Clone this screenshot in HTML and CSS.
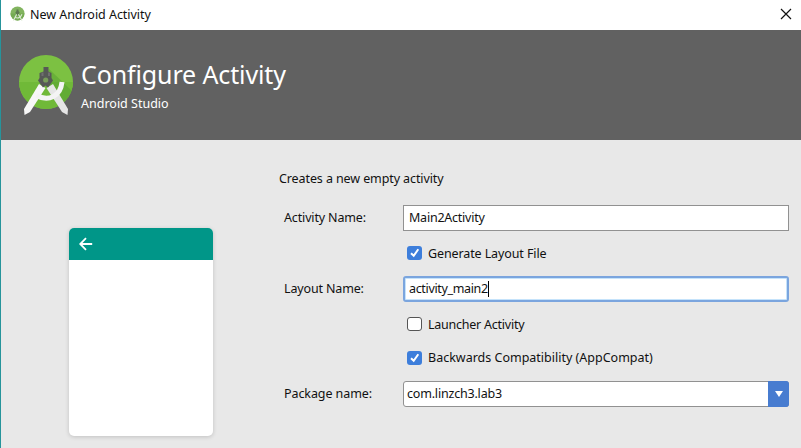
FILE: index.html
```html
<!DOCTYPE html>
<html lang="en">
<head>
<meta charset="utf-8">
<title>New Android Activity</title>
<link rel="stylesheet" href="styles.css">
</head>
<body>
<div class="window">
  <div class="titlebar">
    <svg class="app-icon" width="16" height="16" viewBox="0 0 16 16">
      <circle cx="7.500" cy="7.500" r="7" fill="#82b45f"/>
      <path d="M.5 7.500a7 7 0 0 0 14 0z" fill="#74aa52"/>
      <path d="M6.800 8 3.500 14.500M8.200 8l3.800 6.500M5 11.300c3 1.500 5.500.5 7-3" fill="none" stroke="#d9e8d0" stroke-width="1.200"/>
      <path d="M6.500 3.500h2v1.500l1.200 1.500-2.200 3-2.200-3L6.500 5z" fill="#5d7950"/>
    </svg>
    <span class="title">New Android Activity</span>
    <svg class="close" width="12" height="12" viewBox="0 0 12 12"><path d="M1 1l10 10M11 1L1 11" stroke="#111" stroke-width="1.200"/></svg>
  </div>
  <header class="banner">
    <svg class="logo" width="56" height="64" viewBox="18 53 56 64">
      <defs><clipPath id="disc"><circle cx="46" cy="82" r="27"/></clipPath></defs>
      <circle cx="46" cy="82" r="27" fill="#7cc142"/>
      <g clip-path="url(#disc)">
        <rect x="18" y="82" width="56" height="28" fill="#70b938"/>
        <path d="M49 69l24 23v18H60L46 86z" fill="#549f2f" opacity=".5"/>
      </g>
      <path d="M39 84l6.500 4L30 112l-5.500 3-.5-6z" fill="#f7f7f7"/>
      <path d="M53 84l-6.500 4L62 112l5.500 3 .5-6z" fill="#e6e6e6"/>
      <path d="M36.500 95.500c12 6.500 24 1 25.500-13.500" fill="none" stroke="#f4f4f4" stroke-width="5"/>
      <path d="M43.500 67h5v4.500l3 1.500v5l1.500 2.500-5 7-2.500-2-2.500 2-5-7 1.500-2.500v-5l4-1.500z" fill="#565956"/>
      <circle cx="45.700" cy="80" r="2.600" fill="#789d59"/>
      <path d="M41.500 72.500h2v3.500h-2zM48 72.500h2v3.500h-2z" fill="#707070"/>
    </svg>
    <div class="heading">
      <h1>Configure Activity</h1>
      <p>Android Studio</p>
    </div>
  </header>
  <main class="content">
    <div class="preview">
      <div class="preview-bar">
        <svg width="14" height="14" viewBox="0 0 14 14"><path d="M13.200 7H1.500M7 1.200L1.200 7 7 12.800" fill="none" stroke="#fff" stroke-width="1.800"/></svg>
      </div>
    </div>
    <form class="form">
      <p class="description">Creates a new empty activity</p>
      <div class="row"><span class="label">Activity Name:</span><div class="field"><span class="v-main">Main2Activity</span></div></div>
      <div class="row check"><span class="box on"><svg width="15" height="14" viewBox="0 0 15 14"><path d="M4 7.200l2.700 2.600L11.300 3.200" fill="none" stroke="#fff" stroke-width="2"/></svg></span><span class="c-generate">Generate Layout File</span></div>
      <div class="row"><span class="label">Layout Name:</span><div class="field focus"><span class="v-layout">activity_main2</span><i class="caret"></i></div></div>
      <div class="row check"><span class="box"></span><span class="c-launcher">Launcher Activity</span></div>
      <div class="row check compat"><span class="box on"><svg width="15" height="14" viewBox="0 0 15 14"><path d="M4 7.200l2.700 2.600L11.300 3.200" fill="none" stroke="#fff" stroke-width="2"/></svg></span><span>Backwards Compatibility (AppCompat)</span></div>
      <div class="row"><span class="label l-package">Package name:</span><div class="field combo"><span class="v-package">com.linzch3.lab3</span><span class="drop"><svg width="8" height="6" viewBox="0 0 8 6"><path d="M0 0h8L4 6z" fill="#fff"/></svg></span></div></div>
    </form>
  </main>
</div>
</body>
</html>
```
FILE: styles.css
```css
* { box-sizing: border-box; }
body {
  margin: 0;
  overflow: hidden;
  font: 12.5px/18px "Noto Sans", "Open Sans", sans-serif;
  color: #111;
}
h1, p { margin: 0; font-weight: 400; }
svg { display: block; flex: none; }
span { white-space: nowrap; }
.window {
  height: 448px;
  display: flex;
  flex-direction: column;
  background: #e8e8e8;
  border-left: 1px solid #26949b;
}
.titlebar {
  height: 30px;
  flex: none;
  display: flex;
  align-items: center;
  padding: 0 9px 2px;
  background: #fff;
}
.app-icon { margin-right: 4px; }
.title { padding-top: 1px; letter-spacing: -.04px; }
.close { margin-left: auto; }
.banner {
  height: 110px;
  flex: none;
  display: flex;
  padding: 23px 0 0 17px;
  background: #616161;
  color: #fff;
}
.heading { padding: 4px 0 0 7px; white-space: nowrap; }
h1 { font-size: 25px; line-height: 34px; letter-spacing: -.12px; }
.heading p { margin-top: 4px; }
.content { display: flex; flex: 1; align-items: flex-start; }
.preview {
  width: 144px;
  height: 208px;
  margin: 88px 66px 0 68px;
  border-radius: 5px;
  background: #fff;
  box-shadow: 0 1px 4px rgba(0, 0, 0, .17);
  overflow: hidden;
  flex: none;
}
.preview-bar {
  height: 32px;
  display: flex;
  align-items: center;
  padding-left: 10px;
  background: #009688;
}
.form { width: 510px; padding-top: 30px; }
.description { height: 30px; letter-spacing: -.1px; }
.row { display: flex; align-items: center; height: 35px; padding-left: 5px; }
.label { width: 119px; letter-spacing: -.15px; }
.l-package { letter-spacing: -.08px; }
.field {
  width: 386px;
  height: 26px;
  display: flex;
  align-items: center;
  padding: 0 5px;
  border: 1px solid #919191;
  background: #fff;
}
.field.focus {
  border: 2px solid #7ba5de;
  border-radius: 3px;
  padding: 0 4px;
  box-shadow: inset 0 0 0 1px #c5e3fb;
}
.v-main { letter-spacing: -.23px; }
.v-layout { letter-spacing: -.34px; }
.v-package { letter-spacing: -.19px; }
.c-generate { letter-spacing: -.11px; padding-top: 1px; }
.c-launcher { letter-spacing: -.24px; padding-top: 1px; }
.caret { width: 1px; height: 16px; background: #000; }
.check { padding-left: 128px; height: 36px; }
.check.compat { height: 32px; }
.box {
  width: 15px;
  height: 14px;
  margin-right: 6px;
  border: 1px solid #555;
  border-radius: 3px;
  background: #fff;
}
.box.on { border: 0; background: #3d7edb; }
.compat + .row { height: 39px; }
.combo { padding: 0 0 0 3px; border-radius: 3px; }
.drop {
  width: 21px;
  height: 26px;
  margin: -1px -1px -1px auto;
  display: flex;
  align-items: center;
  justify-content: center;
  border-radius: 0 3px 3px 0;
  background: #477cd0;
}
```
